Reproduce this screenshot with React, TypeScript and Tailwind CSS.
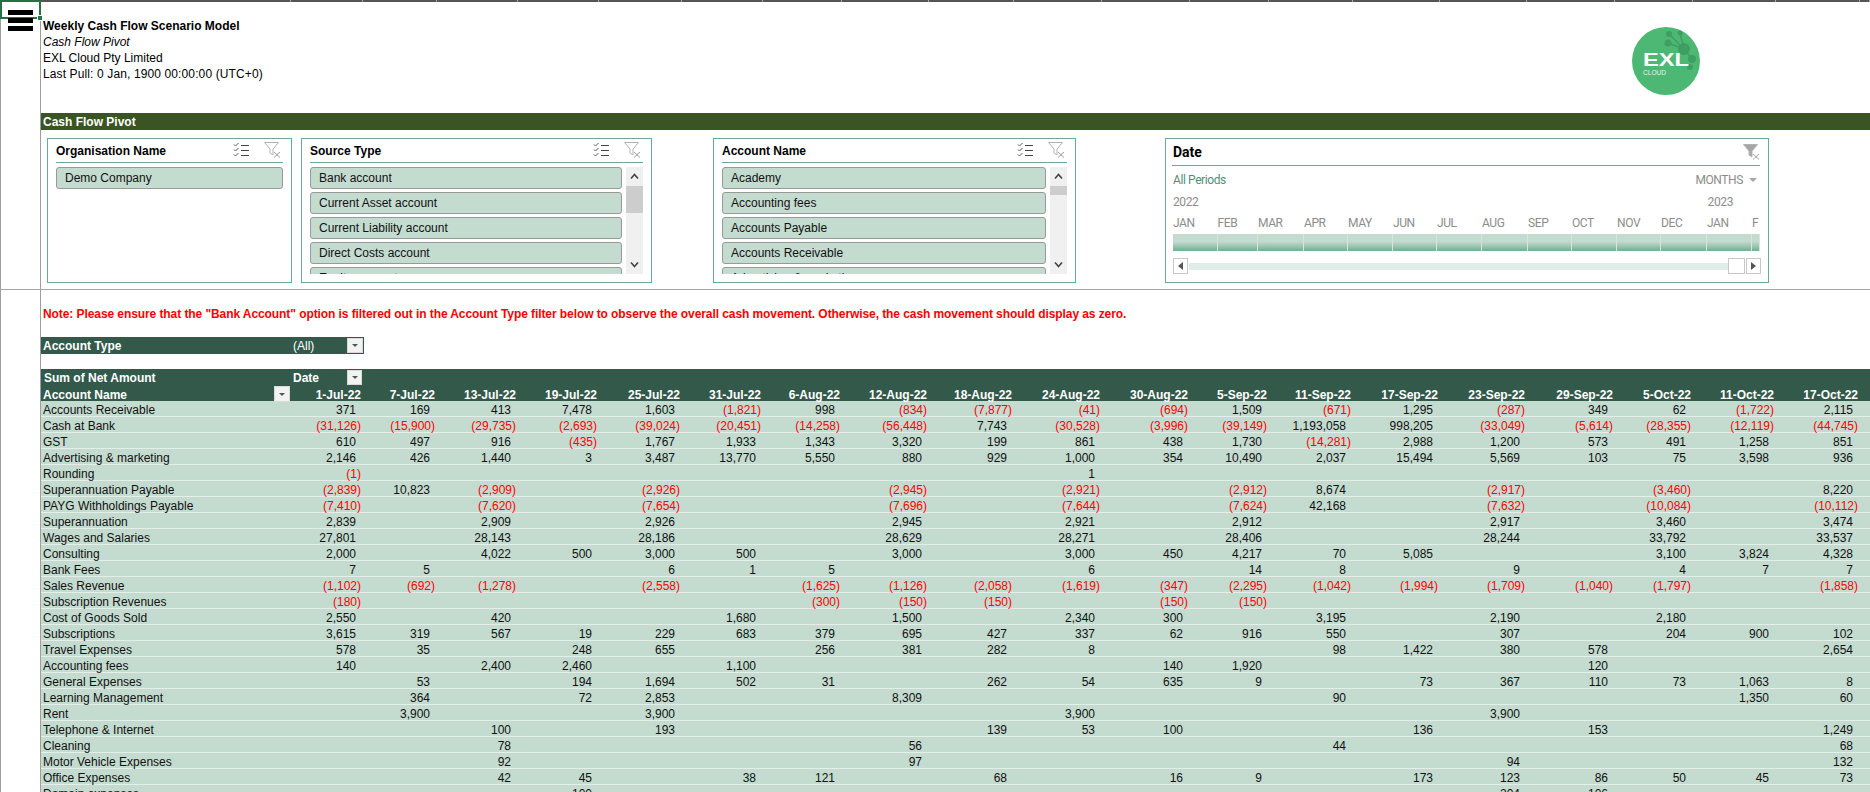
const tableCols =
  "grid grid-cols-[250px_72px_74px_81px_81px_83px_81px_79px_87px_85px_88px_88px_79px_84px_87px_87px_88px_78px_83px_84px_1fr]"
const timelineCols =
  "grid grid-cols-[44.5px_40.5px_46px_44px_45px_44px_45px_46px_44px_45px_44px_46px_45px_8px]"

const dates = [
  "1-Jul-22", "7-Jul-22", "13-Jul-22", "19-Jul-22", "25-Jul-22", "31-Jul-22", "6-Aug-22", "12-Aug-22", "18-Aug-22", "24-Aug-22",
  "30-Aug-22", "5-Sep-22", "11-Sep-22", "17-Sep-22", "23-Sep-22", "29-Sep-22", "5-Oct-22", "11-Oct-22", "17-Oct-22",
]

const rows: [string, string][] = [
  ["Accounts Receivable", "371|169|413|7,478|1,603|(1,821)|998|(834)|(7,877)|(41)|(694)|1,509|(671)|1,295|(287)|349|62|(1,722)|2,115"],
  ["Cash at Bank", "(31,126)|(15,900)|(29,735)|(2,693)|(39,024)|(20,451)|(14,258)|(56,448)|7,743|(30,528)|(3,996)|(39,149)|1,193,058|998,205|(33,049)|(5,614)|(28,355)|(12,119)|(44,745)"],
  ["GST", "610|497|916|(435)|1,767|1,933|1,343|3,320|199|861|438|1,730|(14,281)|2,988|1,200|573|491|1,258|851"],
  ["Advertising & marketing", "2,146|426|1,440|3|3,487|13,770|5,550|880|929|1,000|354|10,490|2,037|15,494|5,569|103|75|3,598|936"],
  ["Rounding", "(1)|||||||||1|||||||||"],
  ["Superannuation Payable", "(2,839)|10,823|(2,909)||(2,926)|||(2,945)||(2,921)||(2,912)|8,674||(2,917)||(3,460)||8,220"],
  ["PAYG Withholdings Payable", "(7,410)||(7,620)||(7,654)|||(7,696)||(7,644)||(7,624)|42,168||(7,632)||(10,084)||(10,112)"],
  ["Superannuation", "2,839||2,909||2,926|||2,945||2,921||2,912|||2,917||3,460||3,474"],
  ["Wages and Salaries", "27,801||28,143||28,186|||28,629||28,271||28,406|||28,244||33,792||33,537"],
  ["Consulting", "2,000||4,022|500|3,000|500||3,000||3,000|450|4,217|70|5,085|||3,100|3,824|4,328"],
  ["Bank Fees", "7|5|||6|1|5|||6||14|8||9||4|7|7"],
  ["Sales Revenue", "(1,102)|(692)|(1,278)||(2,558)||(1,625)|(1,126)|(2,058)|(1,619)|(347)|(2,295)|(1,042)|(1,994)|(1,709)|(1,040)|(1,797)||(1,858)"],
  ["Subscription Revenues", "(180)||||||(300)|(150)|(150)||(150)|(150)|||||||"],
  ["Cost of Goods Sold", "2,550||420|||1,680||1,500||2,340|300||3,195||2,190||2,180||"],
  ["Subscriptions", "3,615|319|567|19|229|683|379|695|427|337|62|916|550||307||204|900|102"],
  ["Travel Expenses", "578|35||248|655||256|381|282|8|||98|1,422|380|578|||2,654"],
  ["Accounting fees", "140||2,400|2,460||1,100|||||140|1,920||||120|||"],
  ["General Expenses", "|53||194|1,694|502|31||262|54|635|9||73|367|110|73|1,063|8"],
  ["Learning Management", "|364||72|2,853|||8,309|||||90|||||1,350|60"],
  ["Rent", "|3,900|||3,900|||||3,900|||||3,900||||"],
  ["Telephone & Internet", "||100||193||||139|53|100|||136||153|||1,249"],
  ["Cleaning", "||78|||||56|||||44||||||68"],
  ["Motor Vehicle Expenses", "||92|||||97|||||||94||||132"],
  ["Office Expenses", "||42|45||38|121||68||16|9||173|123|86|50|45|73"],
  ["Domain expenses", "|||100|||||||||||204|106|||"],
]

const months = ["JAN", "FEB", "MAR", "APR", "MAY", "JUN", "JUL", "AUG", "SEP", "OCT", "NOV", "DEC", "JAN", "F"]

function MultiSelectIcon() {
  return (
    <svg width="17" height="16" viewBox="0 0 17 16" fill="none" stroke="#555" strokeWidth="1">
      <path d="M1 2.5l1.5 1.5L5.5 1M1 7.5L2.5 9l3-3M1 12.5L2.5 14l3-3" />
      <path d="M8 3.5h8M8 8.5h8M8 13.5h8" stroke="#444" />
    </svg>
  )
}

function ClearFilterIcon({ filled }: { filled?: boolean }) {
  return (
    <svg width="17" height="16" viewBox="0 0 17 16" fill={filled ? "#a6a6a6" : "none"} stroke="#b3b3b3" strokeWidth="1">
      <path d="M0.5 0.5h14L9 7v6l-3-2V7z" />
      <path d="M10 10l6 5.5M16 10l-6 5.5" fill="none" stroke="#a0a0a0" />
    </svg>
  )
}

function DropButton({ className }: { className: string }) {
  return (
    <div className={`flex items-center justify-center border border-[#d9d9d9] bg-[#f2f2f2] ${className}`}>
      <div className="h-0 w-0 border-x-[3px] border-t-[3px] border-x-transparent border-t-[#555]" />
    </div>
  )
}

function Slicer({
  title,
  items,
  width,
  thumb,
}: {
  title: string
  items: string[]
  width: string
  thumb?: string
}) {
  return (
    <div className={`flex h-[145px] shrink-0 flex-col border border-[#66ab92] px-[8px] ${width}`}>
      <div className="flex h-[24px] items-center justify-between border-b border-[#66ab92] pr-[2px]">
        <span className="pt-[1px] text-[12px] font-bold text-black">{title}</span>
        <div className="flex items-center gap-[14px] pb-[1px]">
          <MultiSelectIcon />
          <ClearFilterIcon />
        </div>
      </div>
      <div className="mt-[4px] flex h-[107px] gap-[4px] overflow-hidden">
        <div className="flex min-w-0 flex-1 flex-col gap-[3px] overflow-hidden">
          {items.map((item) => (
            <div
              key={item}
              className="flex h-[22px] shrink-0 items-center rounded-[3px] border border-[#999] bg-[#c4dbd0] pl-[8px] text-[12px] text-[#111]"
            >
              {item}
            </div>
          ))}
        </div>
        {thumb && (
          <div className="flex w-[17px] shrink-0 flex-col bg-[#f0f0f0]">
            <div className="flex h-[19px] items-center justify-center">
              <svg width="9" height="7" viewBox="0 0 9 7" fill="none" stroke="#444" strokeWidth="1.6">
                <path d="M1 5.5l3.5-4 3.5 4" />
              </svg>
            </div>
            <div className={`bg-[#cdcdcd] ${thumb}`} />
            <div className="flex flex-1 items-end justify-center pb-[6px]">
              <svg width="9" height="7" viewBox="0 0 9 7" fill="none" stroke="#444" strokeWidth="1.6">
                <path d="M1 1.5l3.5 4 3.5-4" />
              </svg>
            </div>
          </div>
        )}
      </div>
    </div>
  )
}

function DateSlicer() {
  return (
    <div className="ml-[89px] flex h-[145px] w-[604px] shrink-0 flex-col border border-[#66ab92] pl-[6px] pr-[8px] font-['Roboto',sans-serif] text-[12px] tracking-[-0.4px] text-[#8c8c8c]">
      <div className="flex h-[27px] items-center justify-between border-b border-[#66ab92] pl-[1px]">
        <span className="text-[14px] font-bold tracking-normal text-black">Date</span>
        <ClearFilterIcon filled />
      </div>
      <div className="flex h-[28px] items-center justify-between pl-[1px] pr-[3px]">
        <span className="text-[#4f8f76]">All Periods</span>
        <span className="flex items-center gap-[6px]">
          MONTHS
          <span className="h-0 w-0 border-x-[4px] border-t-[4px] border-x-transparent border-t-[#a6a6a6]" />
        </span>
      </div>
      <div className="flex h-[16px] items-center justify-between pl-[1px]">
        <span>2022</span>
        <span className="mr-[27px]">2023</span>
      </div>
      <div className={`${timelineCols} ml-[1px] mt-[5px] h-[16px] w-[587px] items-center overflow-hidden`}>
        {months.map((m, i) => (
          <span key={i} className="overflow-hidden whitespace-nowrap">
            {m}
          </span>
        ))}
      </div>
      <div className={`${timelineCols} ml-[1px] mt-[3px] h-[17px] w-[587px] overflow-hidden`}>
        {months.map((m, i) => (
          <div
            key={i}
            className="border-r border-[#d5e6de] bg-gradient-to-b from-[#c4dbd0] from-45% to-[#6fae94]"
          />
        ))}
      </div>
      <div className="ml-[1px] mt-[7px] flex h-[16px] w-[588px] items-center">
        <div className="flex h-[16px] w-[15px] items-center justify-center border border-[#c8c8c8] bg-white">
          <div className="h-0 w-0 border-y-[4px] border-r-[5px] border-y-transparent border-r-[#555]" />
        </div>
        <div className="ml-[1px] h-[7px] flex-1 bg-[#e0ece7]" />
        <div className="h-[16px] w-[17px] border border-[#c8c8c8] bg-white" />
        <div className="ml-[1px] flex h-[16px] w-[15px] items-center justify-center border border-[#c8c8c8] bg-white">
          <div className="h-0 w-0 border-y-[4px] border-l-[5px] border-y-transparent border-l-[#555]" />
        </div>
      </div>
    </div>
  )
}

function Logo() {
  return (
    <svg width="68" height="68" viewBox="0 0 68 68" className="mt-[25px] shrink-0">
      <circle cx="34" cy="34" r="34" fill="#4cb874" />
      <g fill="#3f9f62">
        <circle cx="52" cy="22" r="6" />
        <circle cx="36" cy="16" r="3.5" />
        <circle cx="37" cy="7" r="3" />
        <circle cx="60" cy="32" r="4" />
        <circle cx="58" cy="40" r="3" />
        <circle cx="48" cy="6" r="2.5" />
      </g>
      <path d="M37 7L52 22L36 16M52 22L60 32M48 6L52 22" stroke="#3f9f62" strokeWidth="1.5" fill="none" />
      <text
        x="11"
        y="39"
        fill="#fff"
        fontFamily="'Liberation Sans',sans-serif"
        fontWeight="700"
        fontSize="19"
        textLength="46"
        lengthAdjust="spacingAndGlyphs"
      >
        EXL
      </text>
      <text
        x="11"
        y="48"
        fill="#e3f5e9"
        fontFamily="'Liberation Sans',sans-serif"
        fontSize="8"
        textLength="23"
        lengthAdjust="spacingAndGlyphs"
      >
        CLOUD
      </text>
    </svg>
  )
}

export default function App() {
  return (
    <div className="flex h-[792px] w-[1870px] overflow-hidden bg-white font-['Liberation_Sans',sans-serif] text-[12px] leading-[16px] text-black">
      {/* row header rail */}
      <div className="relative h-full w-[41px] shrink-0 border-x border-[#9e9e9e]">
        <div className="h-[290px] border-b border-[#a6a6a6]" />
        <div className="absolute left-[-1px] top-0 h-[19px] w-[41px] border-2 border-[#217346]" />
        <div className="absolute right-[-3px] top-[15px] h-[6px] w-[6px] border border-white bg-[#217346]" />
        <div className="absolute left-[7px] top-[10px] flex w-[25px] flex-col gap-[3px]">
          <div className="h-[5px] bg-black" />
          <div className="h-[5px] bg-black" />
          <div className="h-[5px] bg-black" />
        </div>
      </div>

      <div className="min-w-0 flex-1">
        <div className={`${tableCols} h-[2px] bg-[#555]`}>
          {[...dates, "x", ""].map((d, i) => (
            <div key={i} className="border-r border-[#aaa]" />
          ))}
        </div>

        <div className="flex h-[111px]">
          <div className="w-[1591px] shrink-0 pl-[2px] pt-[16px]">
            <div className="font-bold">Weekly Cash Flow Scenario Model</div>
            <div className="italic">Cash Flow Pivot</div>
            <div>EXL Cloud Pty Limited</div>
            <div className="tracking-[0.12px]">Last Pull: 0 Jan, 1900 00:00:00 (UTC+0)</div>
          </div>
          <Logo />
        </div>

        <div className="h-[17px] bg-[#3a5423] pl-[2px] font-bold leading-[18px] text-white">Cash Flow Pivot</div>

        <div className="flex h-[160px] border-b border-[#a6a6a6] pl-[6px] pt-[8px]">
          <Slicer title="Organisation Name" items={["Demo Company"]} width="w-[245px]" />
          <div className="ml-[9px]">
            <Slicer
              title="Source Type"
              width="w-[351px]"
              thumb="h-[27px]"
              items={["Bank account", "Current Asset account", "Current Liability account", "Direct Costs account", "Equity account"]}
            />
          </div>
          <div className="ml-[61px]">
            <Slicer
              title="Account Name"
              width="w-[363px]"
              thumb="h-[9px]"
              items={["Academy", "Accounting fees", "Accounts Payable", "Accounts Receivable", "Advertising & marketing"]}
            />
          </div>
          <DateSlicer />
        </div>

        <div className="mt-[16px] h-[16px] pl-[2px] font-bold tracking-[-0.08px] text-[#ff0000]">
          Note: Please ensure that the "Bank Account" option is filtered out in the Account Type filter below to observe the overall cash movement. Otherwise, the cash movement should display as zero.
        </div>

        <div className="mt-[15px] flex h-[17px] w-[323px] items-center bg-[#33594b] pl-[2px] font-bold text-white">
          <span className="w-[250px]">Account Type</span>
          <span className="w-[54px] font-normal">(All)</span>
          <DropButton className="h-[15px] w-[16px]" />
        </div>

        <div className="mt-[15px] bg-[#33594b] font-bold text-white">
          <div className="flex h-[16px] items-center">
            <span className="w-[250px] pl-[3px] pt-[2px]">Sum of Net Amount</span>
            <span className="w-[56px] pl-[2px] pt-[2px]">Date</span>
            <DropButton className="h-[15px] w-[15px]" />
          </div>
          <div className={`${tableCols} h-[16px] items-center`}>
            <div className="flex items-center justify-between pl-[2px] pr-[1px]">
              <span className="pt-[2px]">Account Name</span>
              <DropButton className="h-[16px] w-[16px]" />
            </div>
            {dates.map((d) => (
              <div key={d} className="pr-[2px] pt-[2px] text-right">
                {d}
              </div>
            ))}
            <div />
          </div>
        </div>

        {rows.map(([name, values]) => (
          <div key={name} className={`${tableCols} h-[16px] border-b border-[#e4efe9] bg-[#c4dbd0] pt-[1px] leading-[16px] text-[#111]`}>
            <div className="pl-[2px]">{name}</div>
            {values.split("|").slice(0, 19).map((v, i) =>
              v.startsWith("(") ? (
                <div key={i} className="pr-[2px] text-right text-[#ff0000]">
                  {v}
                </div>
              ) : (
                <div key={i} className="pr-[7px] text-right">
                  {v}
                </div>
              ),
            )}
          </div>
        ))}
      </div>
    </div>
  )
}
